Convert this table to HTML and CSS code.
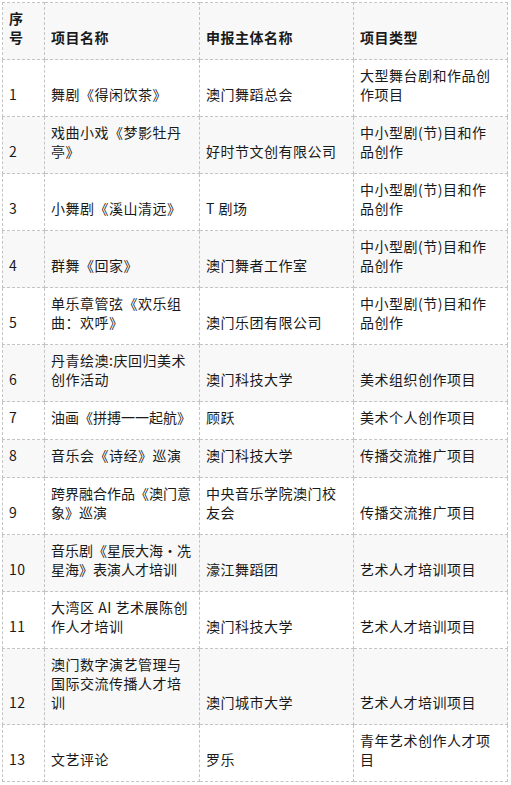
FILE: index.html
```html
<!DOCTYPE html>
<html lang="zh-CN">
<head>
<meta charset="utf-8">
<title>项目列表</title>
<link rel="stylesheet" href="styles.css">
</head>
<body>
<table class="list">
  <colgroup>
    <col class="c-no">
    <col class="c-name">
    <col class="c-org">
    <col class="c-type">
  </colgroup>
  <thead>
    <tr><th>序<br>号</th><th>项目名称</th><th>申报主体名称</th><th>项目类型</th></tr>
  </thead>
  <tbody>
    <tr><td>1</td><td>舞剧《得闲饮茶》</td><td>澳门舞蹈总会</td><td>大型舞台剧和作品创作项目</td></tr>
    <tr><td>2</td><td>戏曲小戏《梦影牡丹亭》</td><td>好时节文创有限公司</td><td>中小型剧(节)目和作品创作</td></tr>
    <tr><td>3</td><td>小舞剧《溪山清远》</td><td>T 剧场</td><td>中小型剧(节)目和作品创作</td></tr>
    <tr><td>4</td><td>群舞《回家》</td><td>澳门舞者工作室</td><td>中小型剧(节)目和作品创作</td></tr>
    <tr><td>5</td><td>单乐章管弦《欢乐组曲：欢呼》</td><td>澳门乐团有限公司</td><td>中小型剧(节)目和作品创作</td></tr>
    <tr><td>6</td><td>丹青绘澳:庆回归美术创作活动</td><td>澳门科技大学</td><td>美术组织创作项目</td></tr>
    <tr><td>7</td><td class="tight">油画《拼搏一一起航》</td><td>顾跃</td><td>美术个人创作项目</td></tr>
    <tr><td>8</td><td>音乐会《诗经》巡演</td><td>澳门科技大学</td><td>传播交流推广项目</td></tr>
    <tr><td>9</td><td class="tight">跨界融合作品《澳门意象》巡演</td><td>中央音乐学院澳门校友会</td><td>传播交流推广项目</td></tr>
    <tr><td>10</td><td class="tight">音乐剧《星辰大海•冼星海》表演人才培训</td><td>濠江舞蹈团</td><td>艺术人才培训项目</td></tr>
    <tr><td>11</td><td>大湾区 AI 艺术展陈创作人才培训</td><td>澳门科技大学</td><td>艺术人才培训项目</td></tr>
    <tr><td>12</td><td>澳门数字演艺管理与国际交流传播人才培训</td><td>澳门城市大学</td><td>艺术人才培训项目</td></tr>
    <tr><td>13</td><td>文艺评论</td><td>罗乐</td><td>青年艺术创作人才项目</td></tr>
  </tbody>
</table>
</body>
</html>
```
FILE: styles.css
```css
html, body {
  margin: 0;
  padding: 0;
  background: #ffffff;
}
body {
  padding: 2px;
  font-family: "Noto Sans CJK SC", "Noto Sans", sans-serif;
  font-size: 14px;
  letter-spacing: 0.5px;
  color: #1a1a1a;
}
.list {
  width: 505px;
  table-layout: fixed;
  border-collapse: collapse;
}
.c-no { width: 42px; }
.c-name { width: 155px; }
.c-org { width: 154px; }
.c-type { width: 154px; }
.list th,
.list td {
  border: 1px dashed #c4c4c4;
  padding: 6px 5px 12px 6px;
  line-height: 19px;
  vertical-align: bottom;
  text-align: left;
  word-break: break-all;
}
.list th:last-child,
.list td:last-child {
  padding-right: 10px;
}
.list th {
  font-weight: bold;
}
.list thead tr,
.list tbody tr:nth-child(even) {
  background: #f8f8f8;
}
.list td.tight {
  letter-spacing: 0;
}
```
